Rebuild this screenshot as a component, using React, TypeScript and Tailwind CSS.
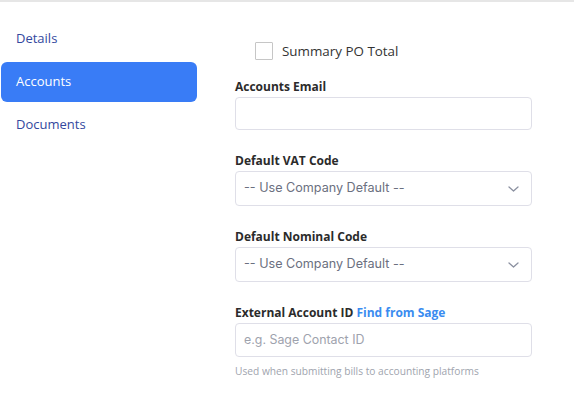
import React from 'react';

const navItems = ['Details', 'Accounts', 'Documents'];

const Chevron: React.FC = () => (
  <svg width="11" height="6" viewBox="0 0 11 6" fill="none" className="text-[#8b90a0]">
    <path d="M1 1l4.5 4 4.5-4" stroke="currentColor" strokeWidth="1.3" strokeLinecap="round" strokeLinejoin="round" />
  </svg>
);

const SelectBox: React.FC<{ value: string }> = ({ value }) => (
  <div className="h-[35px] w-full flex items-center justify-between pl-[8px] pr-[12px] border border-[#dfdfe8] rounded-[4px] bg-white">
    <span className="text-[12.6px] text-[#6b7080] font-['Inter','Noto_Sans',sans-serif]">{value}</span>
    <Chevron />
  </div>
);

const App: React.FC = () => {
  const active = 'Accounts';

  return (
    <div className="w-[574px] h-[393px] bg-white border-t-2 border-[#e6e6e6] font-['Open_Sans','Noto_Sans',sans-serif] overflow-hidden">
      <div className="flex">
        {/* Sidebar */}
        <div className="w-[196px] ml-[1px] pt-[17px] flex flex-col gap-[3px]">
          {navItems.map((item) => (
            <div
              key={item}
              className={`h-[40px] flex items-center px-[15px] rounded-[6px] text-[13px] ${
                item === active ? 'bg-[#397cf6] text-white' : 'text-[#33489e]'
              }`}
            >
              {item}
            </div>
          ))}
        </div>

        {/* Form */}
        <div className="ml-[38px] w-[297px] pt-[39px]">
          <label className="flex items-center gap-[9px] ml-[20px]">
            <span className="w-[18px] h-[18px] border border-[#c6c6c6] rounded-[1px] bg-white" />
            <span className="text-[13.4px] text-[#333]">Summary PO Total</span>
          </label>

          <div className="mt-[17px]">
            <div className="text-[12px] font-bold text-[#2b2b2b] leading-[18px] mb-[1px]">Accounts Email</div>
            <div className="h-[33px] border border-[#dfdfe8] rounded-[4px]" />
          </div>

          <div className="mt-[22px]">
            <div className="text-[12px] font-bold text-[#2b2b2b] leading-[18px] mb-[1px]">Default VAT Code</div>
            <SelectBox value="-- Use Company Default --" />
          </div>

          <div className="mt-[22px]">
            <div className="text-[12px] font-bold text-[#2b2b2b] leading-[18px] mb-[1px]">Default Nominal Code</div>
            <SelectBox value="-- Use Company Default --" />
          </div>

          <div className="mt-[22px]">
            <div className="text-[12px] font-bold text-[#2b2b2b] leading-[18px] mb-[1px]">
              External Account ID <span className="text-[#3a8cf0]">Find from Sage</span>
            </div>
            <div className="h-[34px] flex items-center px-[8px] border border-[#dfdfe8] rounded-[4px]">
              <span className="text-[12.4px] text-[#9ea2ad] font-['Inter','Noto_Sans',sans-serif]">e.g. Sage Contact ID</span>
            </div>
            <div className="mt-[7px] text-[10.2px] text-[#a0a4ae]">Used when submitting bills to accounting platforms</div>
          </div>
        </div>
      </div>
    </div>
  );
};

export default App;
